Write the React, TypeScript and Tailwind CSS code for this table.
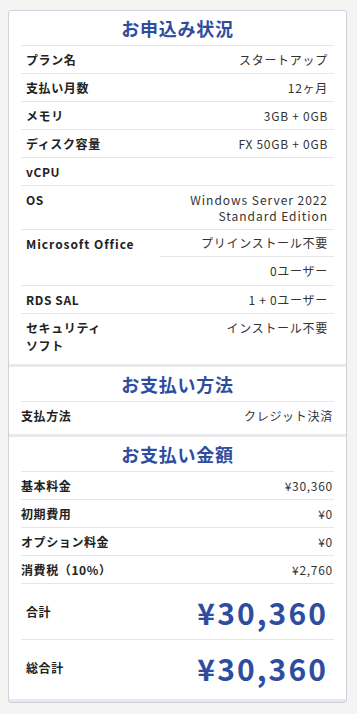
const FONT = "font-['Noto_Sans_CJK_JP','Noto_Sans',sans-serif]";

type Row = { label: React.ReactNode; values: string[] };

const PLAN_ROWS: Row[] = [
  { label: "プラン名", values: ["スタートアップ"] },
  { label: "支払い月数", values: ["12ヶ月"] },
  { label: "メモリ", values: ["3GB + 0GB"] },
  { label: "ディスク容量", values: ["FX 50GB + 0GB"] },
  { label: "vCPU", values: [""] },
];

const FEE_ROWS = [
  { label: "基本料金", value: "¥30,360" },
  { label: "初期費用", value: "¥0" },
  { label: "オプション料金", value: "¥0" },
  { label: "消費税（10%）", value: "¥2,760" },
];

function Title({ children }: { children: React.ReactNode }) {
  return (
    <div className="mx-3 h-[35px] flex items-center justify-center border-b border-[#e6e6e8]">
      <h2 className="text-[18px] font-bold tracking-[0.04em] text-[#2e4d9f] leading-none">{children}</h2>
    </div>
  );
}

function PlanRow({ label, children }: { label: React.ReactNode; children: React.ReactNode }) {
  return (
    <div className="mx-3 flex justify-between items-start pl-[5px] pr-[6px] pt-[6px] pb-[5px] border-b border-[#e6e6e8] text-[12px] leading-4">
      <span className="font-bold tracking-[0.05em] text-[#222]">{label}</span>
      <span className="tracking-[0.06em] text-[#333] text-right">{children}</span>
    </div>
  );
}

export default function App() {
  return (
    <div className={`min-h-[714px] bg-[#f5f4f2] pt-[10px] pl-[8px] ${FONT}`}>
      <div className="w-[339px] border border-[#cfd1dc] rounded-[3px] bg-[#e9e9eb] flex flex-col gap-[3px] pb-[3px] overflow-hidden">
        {/* お申込み状況 */}
        <section className="bg-white pb-[1px]">
          <Title>お申込み状況</Title>
          {PLAN_ROWS.map((r) => (
            <PlanRow key={String(r.label)} label={r.label}>
              {r.values[0]}
            </PlanRow>
          ))}
          <PlanRow label="OS">
            <span className="tracking-[0.08em]">
              Windows Server 2022
              <br />
              Standard Edition
            </span>
          </PlanRow>
          <div className="mx-3 flex items-start border-b border-[#e6e6e8] text-[12px] leading-4">
            <div className="w-[139px] shrink-0 pl-[5px] pt-[6px] font-bold tracking-[0.08em] text-[#222]">
              Microsoft Office
            </div>
            <div className="flex-1 flex flex-col">
              <div className="h-[27px] flex items-center justify-end pr-[6px] border-b border-[#e6e6e8] tracking-[0.06em] text-[#333]">
                プリインストール不要
              </div>
              <div className="h-[28px] flex items-center justify-end pr-[6px] tracking-[0.06em] text-[#333]">
                0ユーザー
              </div>
            </div>
          </div>
          <PlanRow label="RDS SAL">1 + 0ユーザー</PlanRow>
          <div className="mx-3 flex justify-between items-start pl-[5px] pr-[6px] pt-[5px] pb-[8px] text-[12px] leading-[18px]">
            <span className="font-bold tracking-[0.05em] text-[#222]">
              セキュリティ
              <br />
              ソフト
            </span>
            <span className="tracking-[0.06em] text-[#333]">インストール不要</span>
          </div>
        </section>

        {/* お支払い方法 */}
        <section className="bg-white pb-[4px]">
          <Title>お支払い方法</Title>
          <div className="mx-3 h-[28px] flex items-center justify-between pr-[1px] text-[12px]">
            <span className="font-bold tracking-[0.05em] text-[#222]">支払方法</span>
            <span className="tracking-[0.06em] text-[#333]">クレジット決済</span>
          </div>
        </section>

        {/* お支払い金額 */}
        <section className="bg-white pb-[3px]">
          <Title>お支払い金額</Title>
          {FEE_ROWS.map((r) => (
            <div key={r.label} className="mx-3 h-[28px] flex items-center justify-between pr-[1px] border-b border-[#e6e6e8] text-[12px]">
              <span className="font-bold tracking-[0.05em] text-[#222]">{r.label}</span>
              <span className="tracking-[0.06em] text-[#333]">{r.value}</span>
            </div>
          ))}
          <div className="mx-3 h-[56px] flex items-center justify-between pl-[5px] pr-[6px] border-b border-[#e6e6e8]">
            <span className="text-[12px] font-bold tracking-[0.05em] text-[#222]">合計</span>
            <span className="text-[30px] font-bold tracking-[0.07em] leading-none text-[#2e4d9f]">¥30,360</span>
          </div>
          <div className="mx-3 h-[56px] flex items-center justify-between pl-[5px] pr-[6px]">
            <span className="text-[12px] font-bold tracking-[0.05em] text-[#222]">総合計</span>
            <span className="text-[30px] font-bold tracking-[0.07em] leading-none text-[#2e4d9f]">¥30,360</span>
          </div>
        </section>
      </div>
    </div>
  );
}
